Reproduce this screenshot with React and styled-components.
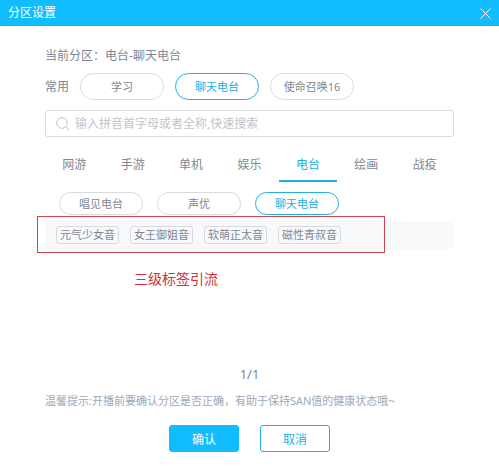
import React from 'react';
import styled, { createGlobalStyle } from 'styled-components';

const RECENT = ['学习', '聊天电台', '使命召唤16'];
const TABS = ['网游', '手游', '单机', '娱乐', '电台', '绘画', '战疫'];
const CATEGORIES = ['唱见电台', '声优', '聊天电台'];
const TAGS = ['元气少女音', '女王御姐音', '软萌正太音', '磁性青叔音'];

const App = () => {
  const [tab, setTab] = React.useState('电台');
  const [category, setCategory] = React.useState('聊天电台');

  return (
    <Dialog>
      <GlobalStyle />

      <Header>
        <Title>分区设置</Title>
        <CloseButton aria-label='关闭'>
          <svg width='11' height='11' viewBox='0 0 11 11' aria-hidden='true'>
            <path d='M0.5 0.5 L10.5 10.5 M10.5 0.5 L0.5 10.5' stroke='currentColor' fill='none' />
          </svg>
        </CloseButton>
      </Header>

      <Body>
        <Current>当前分区：电台-{category}</Current>

        <RecentRow>
          <RecentLabel>常用</RecentLabel>
          {RECENT.map((name) => (
            <Pill key={name} $active={name === category}>
              {name}
            </Pill>
          ))}
        </RecentRow>

        <SearchBox>
          <svg width='14' height='14' viewBox='0 0 14 14' aria-hidden='true'>
            <circle cx='6' cy='6' r='5.3' fill='none' stroke='currentColor' />
            <path d='M9.8 9.8 L13.4 13.2' stroke='currentColor' fill='none' />
          </svg>
          <SearchInput
            type='text'
            aria-label='搜索分区'
            placeholder='输入拼音首字母或者全称,快速搜索'
          />
        </SearchBox>

        <TabList role='tablist'>
          {TABS.map((name) => (
            <Tab
              key={name}
              role='tab'
              aria-selected={name === tab}
              $active={name === tab}
              onClick={() => setTab(name)}
            >
              {name}
            </Tab>
          ))}
        </TabList>

        <CategoryRow>
          {CATEGORIES.map((name) => (
            <Pill
              key={name}
              $compact
              $active={name === category}
              onClick={() => setCategory(name)}
            >
              {name}
            </Pill>
          ))}
        </CategoryRow>

        <TagBand>
          {TAGS.map((name) => (
            <Tag key={name}>{name}</Tag>
          ))}
          <Highlight />
        </TagBand>
        <Caption>三级标签引流</Caption>

        <Pagination>1/1</Pagination>
        <Hint>温馨提示:开播前要确认分区是否正确，有助于保持SAN值的健康状态哦~</Hint>

        <Actions>
          <ActionButton $primary>确认</ActionButton>
          <ActionButton>取消</ActionButton>
        </Actions>
      </Body>
    </Dialog>
  );
};

const GlobalStyle = createGlobalStyle`
  *, *::before, *::after {
    box-sizing: border-box;
  }

  :root {
    --color-primary: #12bdff;
    --color-accent: #23ade5;
    --color-text: #7f8792;
    --color-muted: #9da8b8;
    --color-placeholder: #c2c5c9;
    --color-border: #d8dadd;
  }

  body {
    margin: 0;
    background: #fff;
  }

  body, button, input {
    font-family: 'Noto Sans', 'Noto Sans CJK SC', sans-serif;
  }

  button {
    padding: 0;
    border: none;
    background: none;
    white-space: nowrap;
    cursor: pointer;
  }
`;

const Dialog = styled.main`
  color: var(--color-text);
  font-size: 12px;
  line-height: 16px;
`;

const Header = styled.header`
  display: flex;
  align-items: center;
  justify-content: space-between;
  height: 26px;
  padding: 0 8px;
  background: var(--color-primary);
  color: #fff;
`;

const Title = styled.h1`
  margin: 0;
  font-size: 12px;
  font-weight: 400;
`;

const CloseButton = styled.button`
  display: flex;
  color: #fff;
`;

const Body = styled.div`
  display: flex;
  flex-direction: column;
  padding: 22px 45px;
`;

const Current = styled.p`
  margin: 0;
`;

const RecentRow = styled.div`
  display: flex;
  align-items: center;
  gap: 11px;
  margin-top: 9px;
`;

const RecentLabel = styled.span`
  flex-shrink: 0;
`;

const Pill = styled.button`
  width: 84px;
  height: ${(p) => (p.$compact ? '23px' : '27px')};
  border: 1px solid ${(p) => (p.$active ? 'var(--color-accent)' : 'var(--color-border)')};
  border-radius: 14px;
  color: ${(p) => (p.$active ? 'var(--color-accent)' : 'var(--color-text)')};
  font-size: 11px;
  line-height: 16px;
`;

const SearchBox = styled.label`
  display: flex;
  align-items: center;
  gap: 5px;
  height: 27px;
  margin-top: 10px;
  padding: 0 10px;
  border: 1px solid var(--color-border);
  border-radius: 3px;
  color: var(--color-placeholder);
`;

const SearchInput = styled.input`
  flex: 1;
  min-width: 0;
  padding: 0;
  border: none;
  outline: none;
  background: none;
  color: var(--color-text);
  font-size: 12px;

  &::placeholder {
    color: var(--color-placeholder);
  }
`;

const TabList = styled.div`
  display: grid;
  grid-template-columns: repeat(7, 1fr);
  margin-top: 9px;
`;

const Tab = styled.button`
  height: 36px;
  border-top: 2px solid transparent;
  border-bottom: 2px solid ${(p) => (p.$active ? 'var(--color-accent)' : 'transparent')};
  color: ${(p) => (p.$active ? 'var(--color-accent)' : 'var(--color-text)')};
  font-size: 12px;
`;

const CategoryRow = styled.div`
  display: flex;
  gap: 14px;
  margin-top: 10px;
  padding: 0 14px;
`;

const TagBand = styled.div`
  position: relative;
  display: flex;
  align-items: center;
  gap: 11px;
  height: 28px;
  margin-top: 6px;
  padding: 0 11px;
  background: #f8f9fb;
`;

const Tag = styled.button`
  height: 18px;
  padding: 0 3px;
  border: 1px solid var(--color-border);
  border-radius: 3px;
  color: var(--color-text);
  font-size: 11px;
  line-height: 16px;
`;

const Highlight = styled.div`
  position: absolute;
  inset: -5px 69px -4px -8px;
  border: 1px solid #cf4450;
  pointer-events: none;
`;

const Caption = styled.p`
  margin: 20px 0 0;
  padding-left: 89px;
  color: #cf3038;
  font-size: 14px;
  line-height: 20px;
`;

const Pagination = styled.p`
  margin: 75px 0 0;
  font-size: 13px;
  line-height: 20px;
  text-align: center;
`;

const Hint = styled.p`
  margin: 9px 0 0;
  color: var(--color-muted);
  font-size: 11px;
`;

const Actions = styled.div`
  display: flex;
  justify-content: center;
  gap: 21px;
  margin-top: 16px;
`;

const ActionButton = styled.button`
  width: 70px;
  height: 27px;
  border: 1px solid ${(p) => (p.$primary ? 'var(--color-primary)' : 'var(--color-accent)')};
  border-radius: 3px;
  background: ${(p) => (p.$primary ? 'var(--color-primary)' : '#fff')};
  color: ${(p) => (p.$primary ? '#fff' : 'var(--color-accent)')};
  font-size: 12px;
`;

export default App;
